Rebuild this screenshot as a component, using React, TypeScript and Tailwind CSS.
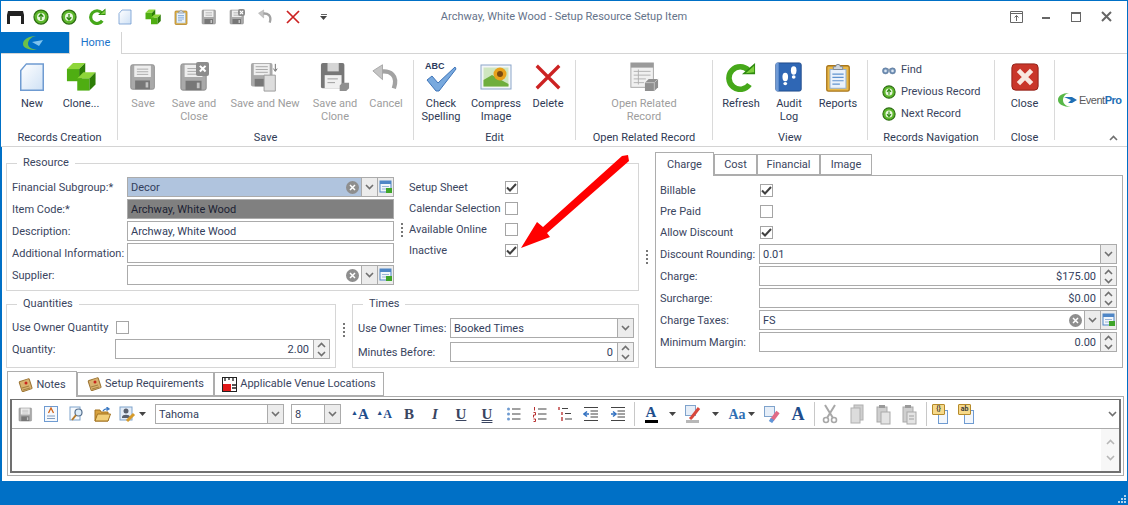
import type { ReactNode } from "react";

type IconProps = { s?: number };

const Svg = ({ s = 16, children }: { s?: number; children: ReactNode }) => (
  <svg width={s} height={s} viewBox="0 0 32 32" className="shrink-0">
    {children}
  </svg>
);

const PageIcon = ({ s }: IconProps) => (
  <Svg s={s}>
    <defs>
      <linearGradient id="pg" x1="0" y1="0" x2="1" y2="1">
        <stop offset="0" stopColor="#ffffff" />
        <stop offset="1" stopColor="#cfe1f5" />
      </linearGradient>
    </defs>
    <path d="M10 2H28V30H4V9Z" fill="url(#pg)" stroke="#6f9bd1" strokeWidth="1.6" />
  </Svg>
);

const Cube = ({ x, y, r }: { x: number; y: number; r: number }) => (
  <g>
    <path d={`M${x} ${y + r * 0.5}L${x + r * 0.5} ${y}H${x + r * 1.5}L${x + r} ${y + r * 0.5}Z`} fill="#8ed63a" />
    <path d={`M${x} ${y + r * 0.5}H${x + r}V${y + r * 1.5}H${x}Z`} fill="#4fae12" />
    <path d={`M${x + r} ${y + r * 0.5}L${x + r * 1.5} ${y}V${y + r}L${x + r} ${y + r * 1.5}Z`} fill="#2c7d06" />
  </g>
);

const CubesIcon = ({ s }: IconProps) => (
  <Svg s={s}>
    <Cube x={1} y={1} r={13} />
    <Cube x={12} y={11} r={13} />
  </Svg>
);

const ClipIcon = ({ s }: IconProps) => (
  <Svg s={s}>
    <rect x="4" y="4" width="24" height="27" rx="2" fill="#e9b949" stroke="#a8751a" strokeWidth="1.4" />
    <rect x="7.5" y="8" width="17" height="20" fill="#eaf2fb" stroke="#8fb0d6" />
    <path d="M10 13H22M10 16.500H22M10 20H22M10 23.500H18" stroke="#5f93cf" strokeWidth="1.3" />
    <path d="M11 8V5H13.500A2.500 2.500 0 0 1 18.500 5H21V8Z" fill="#cfd6de" stroke="#7d8894" />
  </Svg>
);

const Floppy = ({ s, dark }: IconProps & { dark?: boolean }) => (
  <Svg s={s}>
    <rect x="2" y="2" width="27" height="28" rx="2" fill={dark ? "#7a7a7a" : "#a9a9a9"} stroke="#8a8a8a" />
    <rect x="6" y="3" width="19" height="13" fill="#eeeeee" />
    <path d="M9 7H22M9 10H22M9 13H22" stroke="#a5a5a5" />
    <rect x="7" y="20" width="17" height="10" fill="#777777" />
    <rect x="19" y="22" width="3" height="6" fill="#c4c4c4" />
  </Svg>
);

const SaveClose = ({ s }: IconProps) => (
  <div className="relative shrink-0" style={{ width: s, height: s }}>
    <Floppy s={s} />
    <div className="absolute top-0 right-0 flex h-[45%] w-[45%] items-center justify-center rounded-[2px] bg-[#8c8c8c] text-white">
      <svg viewBox="0 0 10 10" className="h-[70%] w-[70%]">
        <path d="M2 2L8 8M8 2L2 8" stroke="#fff" strokeWidth="2.200" />
      </svg>
    </div>
  </div>
);

const SaveNew = ({ s }: IconProps) => (
  <Svg s={s}>
    <rect x="1" y="1" width="23" height="25" rx="2" fill="#a9a9a9" />
    <rect x="4" y="2" width="17" height="12" fill="#eeeeee" />
    <path d="M6 5H19M6 8H19M6 11H19" stroke="#a5a5a5" />
    <rect x="5" y="18" width="12" height="8" fill="#777777" />
    <path d="M15 14H27V31H15Z" fill="#dddddd" stroke="#9a9a9a" />
    <path d="M27 2V9M25 7L27 10L29 7" stroke="#666" fill="none" />
  </Svg>
);

const SaveClone = ({ s }: IconProps) => (
  <Svg s={s}>
    <rect x="1" y="1" width="25" height="27" rx="2" fill="#777777" />
    <rect x="8" y="1" width="12" height="9" fill="#d5d5d5" />
    <rect x="5" y="14" width="18" height="14" fill="#f0f0f0" />
    <path d="M8 18H19M8 22H16" stroke="#999" />
    <path d="M21 25L24 22H31V28L28 31H21Z" fill="#8f8f8f" />
  </Svg>
);

const UndoIcon = ({ s }: IconProps) => (
  <Svg s={s}>
    <path d="M9 10C21 8 30 14 25 29" fill="none" stroke="#a2a2a2" strokeWidth="5" />
    <path d="M1 9L12 2V19Z" fill="#c4c4c4" stroke="#a2a2a2" />
  </Svg>
);

const RedX = ({ s }: IconProps) => (
  <Svg s={s}>
    <path d="M4 4L28 28M28 4L4 28" stroke="#cc2222" strokeWidth="3.500" />
  </Svg>
);

const ArrowCircle = ({ s, down }: IconProps & { down?: boolean }) => (
  <Svg s={s}>
    <circle cx="16" cy="16" r="14" fill="#5eb82c" stroke="#2c6e12" strokeWidth="2.500" />
    <circle cx="16" cy="16" r="8" fill="#eaf7df" />
    <path
      d={down ? "M16 10V21M11.500 16.500L16 22L20.500 16.500" : "M16 22V11M11.500 15.500L16 10L20.500 15.500"}
      stroke="#2f8a12"
      strokeWidth="2.600"
      fill="none"
    />
  </Svg>
);

const RefreshIcon = ({ s }: IconProps) => (
  <Svg s={s}>
    <path d="M24 9A12 12 0 1 0 25 24" fill="none" stroke="#46a81a" strokeWidth="6" />
    <path d="M17 13H31V1Z" fill="#2f8a10" />
    <path d="M21 12L30 11V4Z" fill="#7ed03e" />
  </Svg>
);

const SpellIcon = () => (
  <div className="relative h-[32px] w-[32px] shrink-0">
    <span className="absolute -top-[1px] left-0 font-['Liberation_Sans',sans-serif] text-[9px] font-bold text-[#2b3a5c]">ABC</span>
    <svg width="32" height="32" viewBox="0 0 32 32" className="absolute inset-0">
      <path d="M2 19L7 15L13 22L30 6L31 8L14 30H11Z" fill="#78a9de" stroke="#3e74b8" />
    </svg>
  </div>
);

const PictureIcon = ({ s }: IconProps) => (
  <Svg s={s}>
    <rect x="1" y="4" width="30" height="24" fill="#f4f6f9" stroke="#8ba6c9" />
    <rect x="3.500" y="6.500" width="25" height="19" fill="#cfe6c0" />
    <path d="M3.500 25.500V19L12 14L28.500 23V25.500Z" fill="#6fae3d" />
    <circle cx="20" cy="13" r="6.500" fill="#e8a21c" />
    <circle cx="20" cy="13" r="3" fill="#7a4a10" />
  </Svg>
);

const RelatedIcon = ({ s }: IconProps) => (
  <Svg s={s}>
    <rect x="2" y="1" width="24" height="26" fill="#f0f0f0" stroke="#a5a5a5" />
    <rect x="2" y="1" width="24" height="5" fill="#9a9a9a" />
    <path d="M5 10H23M5 14H23M5 18H18M5 22H16M10 8V24" stroke="#b0b0b0" />
    <path d="M17 22L21 18H31V27L27 31H17Z" fill="#8f8f8f" />
    <path d="M17 22H27V31M27 22L31 18" stroke="#c4c4c4" fill="none" />
  </Svg>
);

const AuditIcon = ({ s }: IconProps) => (
  <Svg s={s}>
    <rect x="2" y="1" width="27" height="30" rx="2" fill="#2f67b5" stroke="#1f4a8a" />
    <rect x="2" y="1" width="3" height="30" fill="#6f9ad6" />
    <ellipse cx="21" cy="9" rx="3" ry="4.500" fill="#fff" />
    <ellipse cx="21" cy="16" rx="2" ry="1.800" fill="#fff" />
    <ellipse cx="12" cy="16" rx="3" ry="4.500" fill="#fff" />
    <ellipse cx="12" cy="23" rx="2" ry="1.800" fill="#fff" />
  </Svg>
);

const CloseBig = ({ s }: IconProps) => (
  <Svg s={s}>
    <rect x="2" y="2" width="28" height="28" rx="4" fill="#c9362a" stroke="#8e1f16" />
    <path d="M9 9L23 23M23 9L9 23" stroke="#f8e7e0" strokeWidth="5" />
  </Svg>
);

const Binoculars = () => (
  <Svg s={14}>
    <circle cx="8" cy="18" r="7" fill="#6f8fb5" stroke="#4f6a8c" />
    <circle cx="24" cy="18" r="7" fill="#6f8fb5" stroke="#4f6a8c" />
    <rect x="13" y="13" width="6" height="5" fill="#889bb0" />
    <circle cx="8" cy="18" r="3" fill="#dbe6f2" />
    <circle cx="24" cy="18" r="3" fill="#dbe6f2" />
  </Svg>
);

const Chevron = ({ up }: { up?: boolean }) => (
  <svg width="9" height="6" viewBox="0 0 9 6">
    <path d={up ? "M1 5L4.500 1.500L8 5" : "M1 1L4.500 4.500L8 1"} stroke="#707070" strokeWidth="1.600" fill="none" />
  </svg>
);

const ClearIcon = () => (
  <svg width="13" height="13" viewBox="0 0 13 13" className="shrink-0">
    <circle cx="6.500" cy="6.500" r="6.500" fill="#8e8e8e" />
    <path d="M4 4L9 9M9 4L4 9" stroke="#fff" strokeWidth="1.500" />
  </svg>
);

const LookupIcon = () => (
  <svg width="14" height="14" viewBox="0 0 14 14" className="shrink-0">
    <rect x="1" y="1" width="11" height="11" fill="#f2f6fb" stroke="#4f86c6" />
    <rect x="1" y="1" width="11" height="3" fill="#4f86c6" />
    <path d="M3 6.500H10M3 9H8" stroke="#9ab5d6" />
    <rect x="7" y="8" width="6" height="5" fill="#3fa52a" />
  </svg>
);

const Check = () => (
  <svg width="11" height="9" viewBox="0 0 11 9">
    <path d="M1 4.500L4 7.500L10 1" stroke="#404040" strokeWidth="2" fill="none" />
  </svg>
);

const CheckBox = ({ on }: { on?: boolean }) => (
  <div className="flex h-[13px] w-[13px] shrink-0 items-center justify-center border border-[#a5a5a5] bg-white">
    {on && <Check />}
  </div>
);

const ComboBtn = ({ w = 16 }: { w?: number }) => (
  <div className="flex shrink-0 items-center justify-center border-l border-[#ababab] bg-[#ececec]" style={{ width: w }}>
    <Chevron />
  </div>
);

const Spin = () => (
  <div className="flex w-[16px] shrink-0 flex-col items-center justify-center gap-[3px] border-l border-[#ababab] bg-[#f0f0f0]">
    <Chevron up />
    <Chevron />
  </div>
);

const Box = ({ className = "bg-white", children }: { className?: string; children?: ReactNode }) => (
  <div className={`flex h-[20px] border border-[#ababab] text-[#33405c] ${className}`}>{children}</div>
);

const Val = ({ children, right }: { children?: ReactNode; right?: boolean }) => (
  <div className={`flex-1 self-center px-[3px] pt-[1px] leading-none ${right ? "pr-[4px] text-right" : ""}`}>{children}</div>
);

const Lookup = ({ text, className = "bg-white" }: { text?: string; className?: string }) => (
  <Box className={className}>
    <Val>{text}</Val>
    <div className="flex items-center pr-[2px]">
      <ClearIcon />
    </div>
    <ComboBtn />
    <div className="flex w-[16px] items-center justify-center border-l border-[#ababab] bg-[#ececec]">
      <LookupIcon />
    </div>
  </Box>
);

const Dots = ({ className = "" }: { className?: string }) => (
  <div className={`flex flex-col gap-[2px] ${className}`}>
    <i className="h-[2px] w-[2px] bg-[#777]" />
    <i className="h-[2px] w-[2px] bg-[#777]" />
    <i className="h-[2px] w-[2px] bg-[#777]" />
    <i className="h-[2px] w-[2px] bg-[#777]" />
  </div>
);

const Group = ({ title, className, children }: { title: string; className: string; children: ReactNode }) => (
  <div className={`relative border border-[#d6d6d6] ${className}`}>
    <span className="absolute -top-[8px] left-[10px] bg-white px-[6px] leading-[14px] text-[#3a4560]">{title}</span>
    {children}
  </div>
);

const Big = ({ icon, lines, w, off }: { icon: ReactNode; lines: string[]; w: number; off?: boolean }) => (
  <div className={`flex shrink-0 flex-col items-center pt-[7px] text-center leading-[13px] ${off ? "text-[#9d9d9d]" : "text-[#2f3a55]"}`} style={{ width: w }}>
    <div className="mb-[4px] flex h-[32px] items-center justify-center">{icon}</div>
    {lines.map((l) => (
      <div key={l} className="whitespace-nowrap">{l}</div>
    ))}
  </div>
);

const RibbonGroup = ({ title, w, pl = 0, children }: { title: string; w: number; pl?: number; children: ReactNode }) => (
  <div className="flex h-full shrink-0 flex-col" style={{ width: w }}>
    <div className="flex h-[76px]" style={{ paddingLeft: pl }}>{children}</div>
    <div className="mt-[1px] text-center leading-[14px] whitespace-nowrap text-[#2f3a55]">{title}</div>
  </div>
);

const Sep = () => <div className="h-[80px] w-px shrink-0 self-center bg-[#dadada]" />;
const TbSep = () => <div className="h-[24px] w-px shrink-0 bg-[#c8c8c8]" />;

const Slot = ({ w, children }: { w: number; children?: ReactNode }) => (
  <div className="flex h-full shrink-0 items-center justify-center" style={{ width: w }}>{children}</div>
);

const Caret = () => (
  <svg width="7" height="4" viewBox="0 0 7 4" className="shrink-0">
    <path d="M0 0H7L3.500 4Z" fill="#444" />
  </svg>
);

const SerifA = ({ c = "#1f4e8c", size = 17, mark }: { c?: string; size?: number; mark?: boolean }) => (
  <span className="font-['Liberation_Serif',serif] font-bold" style={{ color: c, fontSize: size, lineHeight: 1 }}>
    {mark && <sup className="text-[7px]">▲</sup>}A
  </span>
);

const Letter = ({ children, cls = "" }: { children: string; cls?: string }) => (
  <span className={`font-['Liberation_Serif',serif] text-[15px] leading-none font-bold text-[#3a4560] ${cls}`}>{children}</span>
);

const ListIcon = ({ kind }: { kind: "bullet" | "num" | "multi" | "out" | "in" }) => (
  <Svg s={16}>
    {kind === "bullet" && (
      <>
        <circle cx="5" cy="6" r="3" fill="#6f9bd1" />
        <circle cx="5" cy="16" r="3" fill="#6f9bd1" />
        <circle cx="5" cy="26" r="3" fill="#6f9bd1" />
      </>
    )}
    {kind === "num" && <path d="M5 2V9M3 13H7V18H3V23M3 26H7V31H3" stroke="#b01818" strokeWidth="1.800" fill="none" />}
    {kind === "multi" && <path d="M4 2V8M10 12V18M10 22V30" stroke="#b01818" strokeWidth="2.400" fill="none" />}
    {kind === "bullet" && <path d="M12 6H29M12 16H29M12 26H29" stroke="#444" strokeWidth="2.200" />}
    {kind === "num" && <path d="M12 6H29M12 16H29M12 26H29" stroke="#444" strokeWidth="2.200" />}
    {kind === "multi" && <path d="M10 5H22M16 15H28M16 26H30" stroke="#444" strokeWidth="2.200" />}
    {(kind === "out" || kind === "in") && (
      <>
        <path d="M2 3H30M15 10H30M15 16H30M15 22H30M2 29H30" stroke="#444" strokeWidth="2.200" />
        <path d={kind === "out" ? "M12 16H5M8 11L2 16L8 21" : "M2 16H9M6 11L12 16L6 21"} stroke="#2f6fc0" strokeWidth="3" fill="none" />
      </>
    )}
  </Svg>
);

const NoteIcon = () => (
  <svg width="15" height="15" viewBox="0 0 15 15" className="shrink-0">
    <rect x="2.500" y="2" width="10.500" height="10.500" rx="1" fill="#d9b26f" stroke="#9c7434" transform="rotate(-18 7.500 7.500)" />
    <path d="M4 10L11 8M5 12L12 10" stroke="#a5803f" />
    <circle cx="8" cy="5" r="1.500" fill="#c8261e" />
  </svg>
);

const VenueIcon = () => (
  <svg width="15" height="15" viewBox="0 0 15 15" className="shrink-0">
    <rect x="0.500" y="0.500" width="14" height="14" fill="#fff" stroke="#222" />
    <rect x="1" y="7" width="8" height="7" fill="#e21a1a" />
    <path d="M3 1V4M7 1V3M11 1V4M10 8H14M10 11H14" stroke="#222" strokeWidth="1.300" />
  </svg>
);

const DocA = () => (
  <svg width="14" height="16" viewBox="0 0 14 16">
    <rect x="0.500" y="0.500" width="13" height="15" fill="#f6f9fd" stroke="#6f9bd1" />
    <path d="M4.500 7L7 2L9.500 7" stroke="#d0641c" fill="none" strokeWidth="1.300" />
    <path d="M3 10H11M3 12.500H11" stroke="#7f9cc0" />
  </svg>
);

const Preview = () => (
  <svg width="16" height="16" viewBox="0 0 16 16">
    <rect x="1" y="1" width="10" height="13" fill="#f6f9fd" stroke="#7fa3cc" />
    <circle cx="9.500" cy="6.500" r="3.500" fill="#dcecf9" stroke="#56708e" strokeWidth="1.200" />
    <path d="M7 9L3 14" stroke="#b57b2c" strokeWidth="2" />
  </svg>
);

const Folder = () => (
  <svg width="17" height="15" viewBox="0 0 17 15">
    <path d="M1 3H6L7 5H14V14H1Z" fill="#d8a23f" stroke="#a37321" />
    <path d="M1 14L3.500 7H16.500L14 14Z" fill="#f2cf79" stroke="#a37321" />
    <path d="M9 4C10 2 12 1.500 14 2M12.500 0L15 2L12.500 3.500" stroke="#3a78c2" fill="none" strokeWidth="1.300" />
  </svg>
);

const Signature = () => (
  <svg width="17" height="17" viewBox="0 0 17 17">
    <rect x="1" y="1" width="12" height="13" fill="#e4ecf6" stroke="#7fa3cc" />
    <circle cx="7" cy="5" r="2.500" fill="#59606e" />
    <path d="M3 11C3 8 11 8 11 11V12H3Z" fill="#59606e" />
    <path d="M8 15L15 8" stroke="#d69a2a" strokeWidth="3" />
  </svg>
);

const Highlight = () => (
  <svg width="16" height="18" viewBox="0 0 16 18" className="shrink-0">
    <rect x="0.500" y="0.500" width="10" height="10" fill="#e6eef8" stroke="#7fa3cc" />
    <path d="M14 3L7 12L5 14" stroke="#d8483c" strokeWidth="3" fill="none" />
    <rect x="1" y="15" width="13" height="3" fill="#b8b8b8" />
  </svg>
);

const Eraser = () => (
  <svg width="16" height="17" viewBox="0 0 16 17" className="shrink-0">
    <rect x="0.500" y="0.500" width="10" height="10" fill="#e6eef8" stroke="#7fa3cc" />
    <path d="M14 6L8 14" stroke="#e06a86" strokeWidth="4" />
    <path d="M8.500 13L6.500 16" stroke="#5f95d8" strokeWidth="4" />
  </svg>
);

const Scissors = () => (
  <svg width="16" height="20" viewBox="0 0 16 20">
    <path d="M3 1L11 14M13 1L5 14" stroke="#a8a8a8" strokeWidth="2" />
    <circle cx="4" cy="16" r="2.500" fill="none" stroke="#a8a8a8" strokeWidth="1.600" />
    <circle cx="12" cy="16" r="2.500" fill="none" stroke="#a8a8a8" strokeWidth="1.600" />
  </svg>
);

const GrayPages = ({ kind }: { kind: "copy" | "paste" | "special" }) => (
  <svg width="15" height="21" viewBox="0 0 15 21">
    {kind === "copy" && (
      <>
        <rect x="4" y="1" width="9" height="15" fill="#cfcfcf" stroke="#b0b0b0" />
        <rect x="1" y="4" width="9" height="15" fill="#dcdcdc" stroke="#b0b0b0" />
      </>
    )}
    {kind !== "copy" && (
      <>
        <rect x="1" y="3" width="10" height="15" fill="#cfcfcf" stroke="#a9a9a9" />
        <rect x="3" y="1" width="6" height="3" fill="#9a9a9a" />
        <rect x="5" y="8" width="9" height="12" fill="#e4e4e4" stroke="#a9a9a9" />
        {kind === "special" && <path d="M7 12H12M7 15H12" stroke="#a0a0a0" />}
      </>
    )}
  </svg>
);

const FieldDoc = ({ text }: { text: string }) => (
  <div className="relative h-[20px] w-[16px] shrink-0">
    <div className="absolute right-0 bottom-0 h-[14px] w-[10px] border border-[#6f9bd1] bg-[#f3f7fc]" />
    <div className="absolute top-0 left-0 flex h-[11px] w-[13px] items-center justify-center rounded-[1px] border border-[#b58a2a] bg-[#f6d98a] text-[7px] leading-none font-bold text-[#3a3a3a]">{text}</div>
  </div>
);

const Tab = ({ children, active, w, tall }: { children: ReactNode; active?: boolean; w: number; tall?: boolean }) => (
  <div
    className={`flex shrink-0 items-center justify-center gap-[3px] border border-[#adadad] bg-white pt-[1px] text-[#3a4560] ${active ? "relative z-10 -mb-px border-b-0" : ""} ${tall ? (active ? "h-[26px]" : "h-[24px]") : active ? "h-[24px]" : "h-[21px]"}`}
    style={{ width: w }}
  >
    {children}
  </div>
);

const Row = ({ label, children }: { label: string; children: ReactNode }) => (
  <div className="flex items-center">
    <span className="w-[99px] pt-[2px] whitespace-nowrap">{label}</span>
    <div className="mr-[5px] flex flex-1">{children}</div>
  </div>
);

const quickIcons = [
  <ArrowCircle key="u" s={16} />,
  <ArrowCircle key="d" s={16} down />,
  <RefreshIcon key="r" s={17} />,
  <PageIcon key="p" s={16} />,
  <CubesIcon key="c" s={16} />,
  <ClipIcon key="cl" s={16} />,
  <Floppy key="f" s={16} />,
  <SaveClose key="sc" s={16} />,
  <UndoIcon key="un" s={15} />,
  <RedX key="x" s={16} />,
];

export default function App() {
  return (
    <div className="relative flex h-[505px] w-[1128px] flex-col overflow-hidden border-x border-t border-[#0070c6] bg-white font-['Roboto',sans-serif] text-[11px]">
      {/* title bar */}
      <div className="grid h-[31px] shrink-0 grid-cols-[1fr_auto_1fr] items-center">
        <div className="flex items-center pl-[3px]">
          <div className="flex w-[23px] justify-center">
            <svg width="17" height="14" viewBox="0 0 17 14">
              <path d="M1 1H16L17 5V14H14V6H3V14H0V5Z" fill="#222" />
            </svg>
          </div>
          {quickIcons.map((ic, i) => (
            <div key={i} className="flex w-[28px] justify-center first:ml-[3px]">{ic}</div>
          ))}
          <div className="ml-[13px] flex flex-col items-center gap-[1px]">
            <i className="h-px w-[6px] bg-[#666]" />
            <Caret />
          </div>
        </div>
        <div className="pt-[2px] text-[#65738a]">Archway, White Wood - Setup Resource Setup Item</div>
        <div className="flex items-center justify-end pr-[6px] text-[#666]">
          <div className="flex w-[30px] justify-center">
            <svg width="13" height="12" viewBox="0 0 13 12">
              <path d="M0.500 0.500H12.500V11.500H0.500ZM0.500 2.500H12.500M6.500 10V4.500M4.500 6.500L6.500 4.500L8.500 6.500" stroke="#666" fill="none" />
            </svg>
          </div>
          <div className="flex w-[30px] justify-center">
            <i className="mt-[2px] h-[2px] w-[8px] bg-[#666]" />
          </div>
          <div className="flex w-[30px] justify-center">
            <i className="h-[10px] w-[10px] border border-t-2 border-[#666]" />
          </div>
          <div className="flex w-[30px] justify-center">
            <svg width="11" height="11" viewBox="0 0 11 11">
              <path d="M1 1L10 10M10 1L1 10" stroke="#666" strokeWidth="2" />
            </svg>
          </div>
        </div>
      </div>

      {/* ribbon tabs */}
      <div className="flex h-[22px] shrink-0 border-b border-[#d4d4d4]">
        <div className="flex h-[21px] w-[68px] items-center justify-center bg-[#0070c6]">
          <svg width="32" height="20" viewBox="0 0 32 20">
            <path d="M17 3C9 3 4 7 4 11C4 15 10 17 18 17C12 16 9 14 9 11C9 7 12 4 17 3Z" fill="#6cc04a" />
            <path d="M13 9L24 7L20 13Z" fill="#7fc4ee" />
          </svg>
        </div>
        <div className="-mb-px flex h-[22px] w-[53px] items-center justify-center border-x border-[#d4d4d4] bg-white text-[#1a73c9]">Home</div>
      </div>

      {/* ribbon */}
      <div className="flex h-[93px] shrink-0 border-b border-[#d4d4d4] pl-px">
        <RibbonGroup title="Records Creation" w={115} pl={8}>
          <Big w={44} icon={<PageIcon s={30} />} lines={["New"]} />
          <Big w={54} icon={<CubesIcon s={30} />} lines={["Clone..."]} />
        </RibbonGroup>
        <Sep />
        <RibbonGroup title="Save" w={295} pl={6}>
          <Big off w={38} icon={<Floppy s={28} />} lines={["Save"]} />
          <Big off w={64} icon={<SaveClose s={30} />} lines={["Save and", "Close"]} />
          <Big off w={78} icon={<SaveNew s={30} />} lines={["Save and New"]} />
          <Big off w={62} icon={<SaveClone s={30} />} lines={["Save and", "Clone"]} />
          <Big off w={40} icon={<UndoIcon s={28} />} lines={["Cancel"]} />
        </RibbonGroup>
        <Sep />
        <RibbonGroup title="Edit" w={161} pl={5}>
          <Big w={44} icon={<SpellIcon />} lines={["Check", "Spelling"]} />
          <Big w={66} icon={<PictureIcon s={32} />} lines={["Compress", "Image"]} />
          <Big w={38} icon={<RedX s={30} />} lines={["Delete"]} />
        </RibbonGroup>
        <Sep />
        <RibbonGroup title="Open Related Record" w={136}>
          <Big off w={136} icon={<RelatedIcon s={30} />} lines={["Open Related", "Record"]} />
        </RibbonGroup>
        <Sep />
        <RibbonGroup title="View" w={154} pl={7}>
          <Big w={42} icon={<RefreshIcon s={30} />} lines={["Refresh"]} />
          <Big w={54} icon={<AuditIcon s={30} />} lines={["Audit", "Log"]} />
          <Big w={44} icon={<ClipIcon s={30} />} lines={["Reports"]} />
        </RibbonGroup>
        <Sep />
        <RibbonGroup title="Records Navigation" w={126}>
          <div className="flex flex-col pt-[5px] pl-[14px] text-[#3a4560]">
            <div className="flex h-[22px] items-center gap-[5px]"><Binoculars />Find</div>
            <div className="flex h-[22px] items-center gap-[5px]"><ArrowCircle s={14} />Previous Record</div>
            <div className="flex h-[22px] items-center gap-[5px]"><ArrowCircle s={14} down />Next Record</div>
          </div>
        </RibbonGroup>
        <Sep />
        <RibbonGroup title="Close" w={59}>
          <Big w={59} icon={<CloseBig s={30} />} lines={["Close"]} />
        </RibbonGroup>
        <Sep />
        <div className="relative flex h-full flex-1 items-start pt-[38px] pl-[2px]">
          <svg width="22" height="16" viewBox="0 0 22 16" className="shrink-0">
            <path d="M12 1C5 1 1 4 1 8C1 12 6 15 14 15C8 14 6 11 6 8C6 5 8 2 12 1Z" fill="#58b848" />
            <path d="M7 5H15L20 8L15 11H11L14 8Z" fill="#1f6fb5" />
          </svg>
          <span className="font-['Liberation_Sans',sans-serif] text-[11px] leading-[16px] tracking-[-0.5px] text-[#5a5a5a]">
            Event<b className="text-[#1f6fb5]">Pro</b>
          </span>
          <div className="absolute right-[9px] bottom-[5px]">
            <Chevron up />
          </div>
        </div>
      </div>

      {/* form */}
      <div className="flex min-h-0 flex-1 flex-col border-l border-[#0070c6] pl-[4px] text-[#3a4560]">
        <div className="flex h-[221px] shrink-0">
          <div className="flex w-[633px] shrink-0 flex-col pt-[16px]">
            <Group title="Resource" className="flex h-[128px] shrink-0 pt-[13px] pl-[5px]">
              <div className="flex w-[115px] shrink-0 flex-col gap-[2px]">
                {["Financial Subgroup:*", "Item Code:*", "Description:", "Additional Information:", "Supplier:"].map((t) => (
                  <div key={t} className="flex h-[20px] items-center pt-[2px] whitespace-nowrap">{t}</div>
                ))}
              </div>
              <div className="flex w-[267px] shrink-0 flex-col gap-[2px]">
                <Lookup text="Decor" className="bg-[#b0c4de]" />
                <Box className="bg-[#808080]"><Val><span className="text-[#1c2233]">Archway, White Wood</span></Val></Box>
                <Box><Val>Archway, White Wood</Val></Box>
                <Box />
                <Lookup />
              </div>
              <div className="flex w-[15px] shrink-0 justify-center pt-[46px]">
                <Dots />
              </div>
              <div className="flex flex-col">
                {[["Setup Sheet", true], ["Calendar Selection", false], ["Available Online", false], ["Inactive", true]].map(([t, on]) => (
                  <div key={String(t)} className="flex h-[21px] items-center">
                    <span className="w-[96px] pt-[2px] whitespace-nowrap">{t}</span>
                    <CheckBox on={Boolean(on)} />
                  </div>
                ))}
              </div>
            </Group>
            <div className="mt-[13px] flex">
              <Group title="Quantities" className="h-[64px] w-[330px] shrink-0 pt-[12px] pl-[5px]">
                <div className="flex h-[21px] items-center">
                  <span className="w-[104px] pt-[2px] whitespace-nowrap">Use Owner Quantity</span>
                  <CheckBox />
                </div>
                <div className="mt-[1px] flex items-center">
                  <span className="w-[103px] pt-[2px]">Quantity:</span>
                  <Box className="w-[215px] bg-white"><Val right>2.00</Val><Spin /></Box>
                </div>
              </Group>
              <div className="flex w-[16px] shrink-0 justify-center pt-[19px]">
                <Dots />
              </div>
              <Group title="Times" className="h-[64px] flex-1 pt-[13px] pl-[5px]">
                <div className="flex items-center">
                  <span className="w-[92px] pt-[2px] whitespace-nowrap">Use Owner Times:</span>
                  <Box className="w-[184px] bg-white"><Val>Booked Times</Val><ComboBtn /></Box>
                </div>
                <div className="mt-[4px] flex items-center">
                  <span className="w-[92px] pt-[2px] whitespace-nowrap">Minutes Before:</span>
                  <Box className="w-[184px] bg-white"><Val right>0</Val><Spin /></Box>
                </div>
              </Group>
            </div>
          </div>

          <div className="flex w-[16px] shrink-0 justify-center pt-[103px]">
            <Dots />
          </div>

          <div className="flex w-[468px] shrink-0 flex-col pt-[5px]">
            <div className="flex h-[23px] items-end">
              <Tab active w={59}>Charge</Tab>
              <Tab w={43}>Cost</Tab>
              <Tab w={63}>Financial</Tab>
              <Tab w={52}>Image</Tab>
            </div>
            <div className="h-[193px] border border-[#adadad] pt-[4px] pl-[4px]">
              {[["Billable", true], ["Pre Paid", false], ["Allow Discount", true]].map(([t, on]) => (
                <div key={String(t)} className="flex h-[21px] items-center">
                  <span className="w-[100px] pt-[2px]">{t}</span>
                  <CheckBox on={Boolean(on)} />
                </div>
              ))}
              <div className="flex flex-col gap-[2px] pt-[1px]">
                <Row label="Discount Rounding:"><Box className="flex-1 bg-white"><Val>0.01</Val><ComboBtn /></Box></Row>
                <Row label="Charge:"><Box className="flex-1 bg-white"><Val right>$175.00</Val><Spin /></Box></Row>
                <Row label="Surcharge:"><Box className="flex-1 bg-white"><Val right>$0.00</Val><Spin /></Box></Row>
                <Row label="Charge Taxes:"><Lookup text="FS" className="flex-1 bg-white" /></Row>
                <Row label="Minimum Margin:"><Box className="flex-1 bg-white"><Val right>0.00</Val><Spin /></Box></Row>
              </div>
            </div>
          </div>
        </div>

        {/* notes */}
        <div className="mt-[2px] flex h-[26px] shrink-0 items-end pl-[1px]">
          <Tab tall active w={70}><NoteIcon /><span>Notes</span></Tab>
          <Tab tall w={137}><NoteIcon /><span>Setup Requirements</span></Tab>
          <Tab tall w={170}><VenueIcon /><span>Applicable Venue Locations</span></Tab>
        </div>
        <div className="ml-[1px] h-[80px] w-[1117px] shrink-0 border border-[#adadad] p-[2px]">
          <div className="flex h-full flex-col border-2 border-t border-[#707070] border-l-[#707070]">
            <div className="flex h-[29px] shrink-0 items-center border-b border-[#ababab]">
              <Slot w={26}><Floppy s={15} /></Slot>
              <Slot w={26}><DocA /></Slot>
              <Slot w={26}><Preview /></Slot>
              <Slot w={25}><Folder /></Slot>
              <Slot w={24}><Signature /></Slot>
              <Slot w={6}><Caret /></Slot>
              <Box className="ml-[10px] w-[129px] bg-white"><Val>Tahoma</Val><ComboBtn /></Box>
              <Box className="ml-[7px] w-[50px] bg-white"><Val>8</Val><ComboBtn /></Box>
              <Slot w={38}><SerifA size={15} mark /></Slot>
              <Slot w={10}><SerifA size={12} mark /></Slot>
              <Slot w={7} />
              <Slot w={26}><Letter>B</Letter></Slot>
              <Slot w={26}><Letter cls="italic">I</Letter></Slot>
              <Slot w={26}><Letter cls="underline">U</Letter></Slot>
              <Slot w={26}><Letter cls="underline decoration-double">U</Letter></Slot>
              <Slot w={27}><ListIcon kind="bullet" /></Slot>
              <Slot w={26}><ListIcon kind="num" /></Slot>
              <Slot w={24}><ListIcon kind="multi" /></Slot>
              <Slot w={28}><ListIcon kind="out" /></Slot>
              <Slot w={26}><ListIcon kind="in" /></Slot>
              <Slot w={3} />
              <TbSep />
              <Slot w={32}>
                <div className="flex flex-col items-center">
                  <SerifA size={15} />
                  <i className="h-[3px] w-[13px] bg-black" />
                </div>
              </Slot>
              <Slot w={10}><Caret /></Slot>
              <Slot w={32}><Highlight /></Slot>
              <Slot w={12}><Caret /></Slot>
              <Slot w={4} />
              <Slot w={24}>
                <span className="font-['Liberation_Serif',serif] text-[14px] font-bold text-[#2f6fb5]">Aa</span>
              </Slot>
              <Slot w={4}><Caret /></Slot>
              <Slot w={38}><Eraser /></Slot>
              <Slot w={14}><SerifA size={18} /></Slot>
              <Slot w={9} />
              <TbSep />
              <Slot w={30}><Scissors /></Slot>
              <Slot w={24}><GrayPages kind="copy" /></Slot>
              <Slot w={28}><GrayPages kind="paste" /></Slot>
              <Slot w={24}><GrayPages kind="special" /></Slot>
              <Slot w={5} />
              <TbSep />
              <Slot w={26}><FieldDoc text="{}" /></Slot>
              <Slot w={26}><FieldDoc text="ab" /></Slot>
              <div className="ml-auto pr-[2px]">
                <Chevron />
              </div>
            </div>
            <div className="flex min-h-0 flex-1 justify-end">
              <div className="flex w-[18px] flex-col items-center justify-between bg-[#f0f0f0] py-[10px] opacity-50">
                <Chevron up />
                <Chevron />
              </div>
            </div>
          </div>
        </div>
      </div>

      {/* status bar */}
      <div className="relative h-[24px] shrink-0 bg-[#0070c6]">
        <div className="absolute right-[1px] bottom-[2px] grid grid-cols-3 gap-[1px]">
          <i className="col-start-3 h-[2px] w-[2px] bg-[#b5d5ee]" />
          <i className="col-start-2 h-[2px] w-[2px] bg-[#b5d5ee]" />
          <i className="h-[2px] w-[2px] bg-[#b5d5ee]" />
          <i className="h-[2px] w-[2px] bg-[#b5d5ee]" />
          <i className="h-[2px] w-[2px] bg-[#b5d5ee]" />
          <i className="h-[2px] w-[2px] bg-[#b5d5ee]" />
        </div>
      </div>

      {/* annotation arrow */}
      <svg className="pointer-events-none absolute top-[-1px] left-[-1px]" width="1128" height="505" viewBox="0 0 1128 505">
        <path d="M521 248L537 222L543 227L622 156L628 155L629 161L547 233L550 237Z" fill="#ff0000" />
      </svg>
    </div>
  );
}
